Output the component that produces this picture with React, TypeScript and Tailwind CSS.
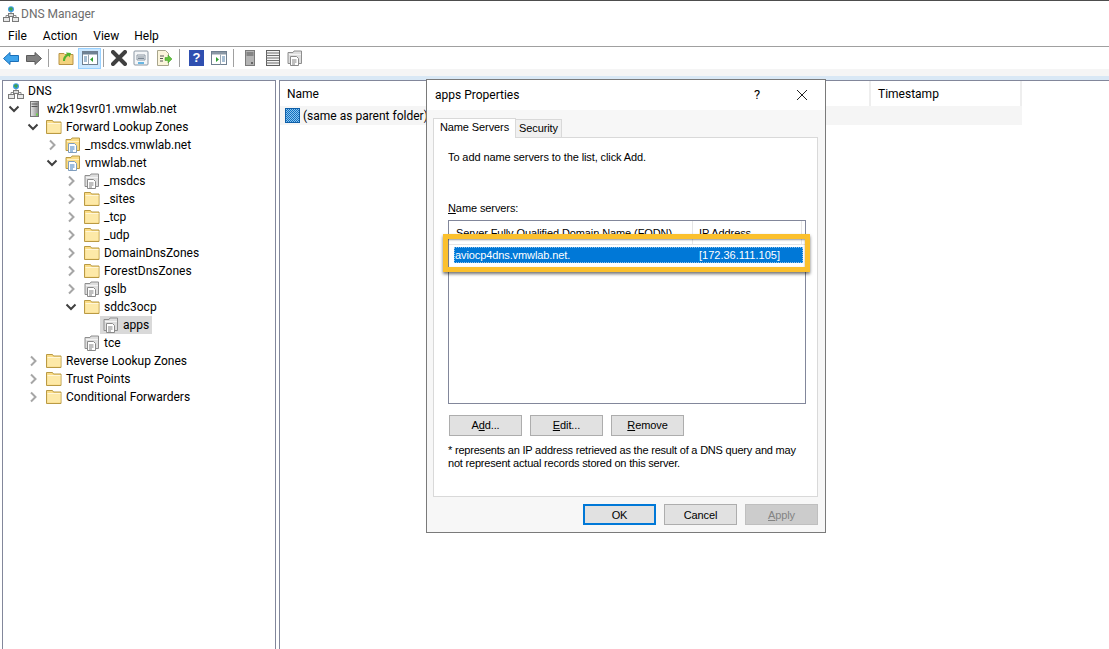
const uiFont = "font-['Roboto','Noto_Sans',sans-serif]"
const dlgFont = "font-['Liberation_Sans',Arial,sans-serif]"

function DnsIcon({ className = "" }: { className?: string }) {
  return (
    <svg viewBox="0 0 16 16" className={`w-4 h-4 shrink-0 ${className}`}>
      <circle cx="8" cy="3.200" r="3" fill="#3d9be0" />
      <path d="M6 2.200 8 1l2 1.500-1.500 2.500L6.500 4z" fill="#3fa34d" />
      <path d="M8 6v3M3 12V9.500h10V12" fill="none" stroke="#8a8a8a" />
      <rect x="5.500" y="7.500" width="5" height="3" fill="#dcdcdc" stroke="#7a7a7a" />
      <rect x="0.500" y="11.500" width="6" height="4" fill="#e8e8e8" stroke="#7a7a7a" />
      <rect x="9.500" y="11.500" width="6" height="4" fill="#e8e8e8" stroke="#7a7a7a" />
    </svg>
  )
}

function ServerIcon() {
  return (
    <svg viewBox="0 0 16 16" className="w-4 h-4 shrink-0">
      <defs>
        <linearGradient id="srv" x1="0" x2="1" y1="0" y2="0">
          <stop offset="0" stopColor="#e8e8e8" />
          <stop offset="1" stopColor="#8c8c8c" />
        </linearGradient>
      </defs>
      <rect x="3.500" y="0.500" width="8" height="15" fill="url(#srv)" stroke="#777" />
      <path d="M4.500 3h6M4.500 5.500h6" stroke="#555" />
      <rect x="9" y="12.500" width="2" height="2" fill="#6ccf4a" />
    </svg>
  )
}

function FolderIcon() {
  return (
    <svg viewBox="0 0 16 16" className="w-4 h-4 shrink-0">
      <path d="M.5 14.500V1.500h6l1 1.500h7.500v11.500z" fill="#fbdc85" stroke="#b99a44" />
      <path d="M1.500 4.500h13v9h-13z" fill="#fde9a8" />
      <path d="M1.500 4.500h13" stroke="#fff6d8" />
    </svg>
  )
}

function ZoneIcon({ grey = false }: { grey?: boolean }) {
  const edge = grey ? "#8e8e8e" : "#b99a44"
  const fill = grey ? "#dedede" : "#fbdc85"
  return (
    <svg viewBox="0 0 16 16" className="w-4 h-4 shrink-0">
      <path d="M1 13.500V2.500h5l1-1.500h7.500v12.500z" fill={fill} stroke={edge} />
      <path d="M2 4.500h12" stroke={grey ? "#f4f4f4" : "#fff2c4"} />
      <path d="M3.500 6.500h6l2 2v7h-8z" fill="#fff" stroke={grey ? "#8a8a8a" : "#7f9dbd"} />
      <path d="M5 10h4.500M5 12h4.500M5 14h3" stroke={grey ? "#808080" : "#3f7fc0"} />
    </svg>
  )
}

function Chevron({ open }: { open: boolean }) {
  return (
    <svg viewBox="0 0 14 14" className="w-3.5 h-3.5 shrink-0">
      <path
        d={open ? "M2.500 4.500 7 9l4.500-4.500" : "M5 2.500 9.500 7 5 11.500"}
        fill="none"
        stroke={open ? "#404040" : "#a6a6a6"}
        strokeWidth="2"
      />
    </svg>
  )
}

type TreeItem = {
  label: string
  level: number
  icon: "dns" | "server" | "folder" | "zone" | "grey"
  arrow?: "open" | "closed"
  selected?: boolean
}

const tree: TreeItem[] = [
  { label: "DNS", level: 0, icon: "dns" },
  { label: "w2k19svr01.vmwlab.net", level: 1, icon: "server", arrow: "open" },
  { label: "Forward Lookup Zones", level: 2, icon: "folder", arrow: "open" },
  { label: "_msdcs.vmwlab.net", level: 3, icon: "zone", arrow: "closed" },
  { label: "vmwlab.net", level: 3, icon: "zone", arrow: "open" },
  { label: "_msdcs", level: 4, icon: "grey", arrow: "closed" },
  { label: "_sites", level: 4, icon: "folder", arrow: "closed" },
  { label: "_tcp", level: 4, icon: "folder", arrow: "closed" },
  { label: "_udp", level: 4, icon: "folder", arrow: "closed" },
  { label: "DomainDnsZones", level: 4, icon: "folder", arrow: "closed" },
  { label: "ForestDnsZones", level: 4, icon: "folder", arrow: "closed" },
  { label: "gslb", level: 4, icon: "grey", arrow: "closed" },
  { label: "sddc3ocp", level: 4, icon: "folder", arrow: "open" },
  { label: "apps", level: 5, icon: "grey", selected: true },
  { label: "tce", level: 4, icon: "grey" },
  { label: "Reverse Lookup Zones", level: 2, icon: "folder", arrow: "closed" },
  { label: "Trust Points", level: 2, icon: "folder", arrow: "closed" },
  { label: "Conditional Forwarders", level: 2, icon: "folder", arrow: "closed" },
]

function TreeRow({ item }: { item: TreeItem }) {
  return (
    <div
      className="flex items-center h-[18px] text-[12px] text-black whitespace-nowrap"
      style={{ paddingLeft: item.level === 0 ? 5 : item.level * 19 - 15 }}
    >
      {item.level > 0 && (
        <span className="w-5 flex justify-start shrink-0">
          {item.arrow && <Chevron open={item.arrow === "open"} />}
        </span>
      )}
      <span className={`flex items-center h-[18px] ${item.selected ? "bg-[#d9d9d9] pl-[3px] -ml-[3px] pr-[3px]" : ""}`}>
        {item.icon === "dns" && <DnsIcon />}
        {item.icon === "server" && <ServerIcon />}
        {item.icon === "folder" && <FolderIcon />}
        {item.icon === "zone" && <ZoneIcon />}
        {item.icon === "grey" && <ZoneIcon grey />}
        <span className="ml-1">{item.label}</span>
      </span>
    </div>
  )
}

function Sep() {
  return <span className="block w-px h-[18px] bg-[#a0a0a0] shrink-0" />
}

function Toolbar() {
  return (
    <div className="flex items-center h-[22px] pl-[3px] bg-white">
      <svg viewBox="0 0 16 14" className="w-4 h-[15px] shrink-0">
        <path d="M.5 7 7 1v3h8.500v6H7v3z" fill="#3fa4ec" stroke="#1b6fb8" />
      </svg>
      <svg viewBox="0 0 16 14" className="w-4 h-[15px] shrink-0 ml-[7px]">
        <path d="M15.500 7 9 1v3H.5v6H9v3z" fill="#808080" stroke="#5b5b5b" />
      </svg>
      <span className="ml-[6px]"><Sep /></span>
      <svg viewBox="0 0 16 16" className="w-4 h-4 shrink-0 ml-[9px]">
        <path d="M1 14.500V3.500h5l1 1h8v10z" fill="#f3d27e" stroke="#b89344" />
        <path d="M5 11C5 7 7 5 9 4.500L8 2.500l5 .5-1.500 4.500-1-1.800C8.500 6.500 7 8.500 7 11z" fill="#4fb32f" />
      </svg>
      <span className="ml-[4px] flex items-center justify-center w-[23px] h-[21px] bg-[#cce8ff] border border-[#99d1ff] shrink-0">
        <svg viewBox="0 0 16 14" className="w-4 h-3.5">
          <rect x=".5" y=".5" width="15" height="13" fill="#fff" stroke="#6f7f8f" />
          <path d="M1 1h14v2.500H1z" fill="#6f8294" />
          <path d="M2 6h3M2 8h3M2 10h3" stroke="#4f7fa8" />
          <path d="M11 6v5L8 8.500z" fill="#30a030" />
          <path d="M6.500 3.500v10" stroke="#9aa6b2" />
        </svg>
      </span>
      <span className="ml-[2px]"><Sep /></span>
      <svg viewBox="0 0 16 16" className="w-4 h-4 shrink-0 ml-[7px]">
        <path d="M2 2 14 14M14 2 2 14" stroke="#404040" strokeWidth="4" strokeLinecap="round" />
      </svg>
      <svg viewBox="0 0 16 16" className="w-4 h-4 shrink-0 ml-[6px]">
        <rect x="1" y="1" width="14" height="14" rx="1" fill="#f4f6f8" stroke="#8b97a3" />
        <path d="M4 5h8v5H4z" fill="none" stroke="#8b97a3" />
        <path d="M5 7h6M5 8.500h6" stroke="#7b8793" />
        <path d="M5 13h6" stroke="#3aa0dc" strokeWidth="1.500" />
      </svg>
      <svg viewBox="0 0 16 16" className="w-4 h-4 shrink-0 ml-[7px]">
        <path d="M1.500.5h8l3 3V15.500h-11z" fill="#fbf5dc" stroke="#a8a58c" />
        <path d="M4 6h4M4 8.500h3M4 11h3" stroke="#555" />
        <path d="M9 7.500h3V5l4 4-4 4v-2.500H9z" fill="#62c23c" stroke="#3d9a25" strokeWidth=".5" />
      </svg>
      <span className="ml-[7px]"><Sep /></span>
      <span className="ml-[9px] w-[15px] h-4 shrink-0 flex items-center justify-center bg-[#2f4fb0] text-white text-[13px] font-bold font-['Liberation_Sans',sans-serif]">?</span>
      <svg viewBox="0 0 16 14" className="w-4 h-3.5 shrink-0 ml-[7px]">
        <rect x=".5" y=".5" width="15" height="13" fill="#fff" stroke="#6f7f8f" />
        <path d="M1 1h14v2.500H1z" fill="#8b98a5" />
        <path d="M5 6v5l3-2.500z" fill="#30a030" />
        <path d="M11 6h3M11 8h3M11 10h3" stroke="#4f7fa8" />
        <path d="M9.500 3.500v10" stroke="#9aa6b2" />
      </svg>
      <span className="ml-[6px]"><Sep /></span>
      <svg viewBox="0 0 10 16" className="w-2.5 h-4 shrink-0 ml-[11px]">
        <rect x=".5" y=".5" width="9" height="15" fill="#b4b4b4" stroke="#7a7a7a" />
        <path d="M1.500 3h7M1.500 5h7" stroke="#555" />
        <rect x="6" y="12" width="2" height="2" fill="#666" />
      </svg>
      <svg viewBox="0 0 16 16" className="w-4 h-4 shrink-0 ml-[10px]">
        <rect x="1.500" y=".5" width="13" height="15" fill="#f2f2f2" stroke="#5f5f5f" />
        <path d="M1 3h13M1 5.500h13M1 8h13M1 10.500h13M1 13h13" stroke="#6f6f6f" />
      </svg>
      <span className="ml-[6px]"><ZoneIcon grey /></span>
    </div>
  )
}

function PushButton({ children, className = "" }: { children: React.ReactNode; className?: string }) {
  return (
    <button className={`w-[73px] h-[21px] flex items-center justify-center bg-[#e1e1e1] border border-[#adadad] text-[11px] tracking-[-0.1px] text-black ${className}`}>
      {children}
    </button>
  )
}

function PropertiesDialog() {
  return (
    <div className={`absolute left-[426px] top-[79px] w-[400px] h-[454px] flex flex-col bg-[#f7f7f7] border border-[#7a7a7a] text-black text-[11px] tracking-[-0.1px] ${dlgFont}`}>
      <div className="h-[30px] shrink-0 bg-white flex items-center pl-2 pr-4">
        <span className={`text-[12px] tracking-normal ${uiFont}`}>apps Properties</span>
        <span className={`ml-auto text-[13px] ${uiFont}`}>?</span>
        <svg viewBox="0 0 12 12" className="w-3 h-3 ml-[36px] mr-[1px]">
          <path d="M1 1l10 10M11 1 1 11" stroke="#222" strokeWidth="1" />
        </svg>
      </div>
      <div className="flex items-end h-[27px] shrink-0 pl-1.5">
        <div className="w-[83px] h-[20px] flex items-center justify-center bg-white border border-b-0 border-[#d9d9d9] -mb-px relative z-10 pb-[2px]">Name Servers</div>
        <div className="w-[46px] h-[18px] flex items-center justify-center bg-[#f0f0f0] border border-b-0 border-l-0 border-[#d9d9d9]">Security</div>
      </div>
      <div className="w-[385px] h-[360px] ml-1.5 bg-white border border-[#d9d9d9] flex flex-col px-[14px]">
        <p className="mt-[12px] leading-[14px]">To add name servers to the list, click Add.</p>
        <p className="mt-[37px] leading-[14px]"><u>N</u>ame servers:</p>
        <div className="relative mt-[5px] w-[358px] h-[184px] shrink-0 border border-[#82879b] bg-white">
          <div className="flex h-[24px] border-b border-[#e5e5e5] leading-[24px] whitespace-nowrap">
            <span className="w-[244px] pl-[7px] overflow-hidden border-r border-[#e5e5e5]">Server Fully Qualified Domain Name (FQDN)</span>
            <span className="w-[109px] pl-[6px] border-r border-[#e5e5e5]">IP Address</span>
          </div>
          <div className="flex items-center mt-px ml-[5px] mr-[2px] h-[16px] bg-[#0078d7] text-white outline-1 outline-dotted outline-[#8cc0ea] -outline-offset-1 relative top-[1px]">
            <span className="w-[245px] pl-[1px]">aviocp4dns.vmwlab.net.</span>
            <span className="tracking-normal">[172.36.111.105]</span>
          </div>
          <div className="absolute -left-[6px] top-[13px] w-[367px] h-[38px] border-[5px] border-[#fbc02d] shadow-[0_2px_3px_rgba(0,0,0,0.55),inset_0_1px_2px_rgba(0,0,0,0.4)]" />
        </div>
        <div className="flex gap-2 mt-[11px] ml-px">
          <PushButton>A<u>d</u>d...</PushButton>
          <PushButton><u>E</u>dit...</PushButton>
          <PushButton><u>R</u>emove</PushButton>
        </div>
        <p className="mt-[8px] leading-[13px] whitespace-nowrap tracking-[-0.2px]">
          * represents an IP address retrieved as the result of a DNS query and may<br />
          not represent actual records stored on this server.
        </p>
      </div>
      <div className="flex gap-2 pl-[156px] mt-[7px]">
        <PushButton className="!border-2 !border-[#0078d7] pt-px">OK</PushButton>
        <PushButton className="pt-px">Cancel</PushButton>
        <PushButton className="!bg-[#cccccc] !border-[#bfbfbf] !text-[#838383] pt-px"><u>A</u>pply</PushButton>
      </div>
    </div>
  )
}

export default function App() {
  return (
    <div className={`relative w-[1109px] h-[649px] overflow-hidden bg-white flex flex-col ${uiFont}`}>
      <div className="h-px bg-[#4d4d4d] shrink-0" />
      <div className="h-[25px] shrink-0 flex items-center pl-[3px] text-[12px] text-[#6d6d6d]">
        <DnsIcon />
        <span className="ml-[2px]">DNS Manager</span>
      </div>
      <div className="h-[20px] shrink-0 flex items-center text-[12px] text-black border-b border-[#a0a0a0] box-content">
        <span className="ml-[8px]">File</span>
        <span className="ml-[16px]">Action</span>
        <span className="ml-[16px]">View</span>
        <span className="ml-[15px]">Help</span>
      </div>
      <Toolbar />
      <div className="h-[7px] shrink-0 bg-[#f5f5f5]" />
      <div className="h-1 shrink-0 bg-[#d9e8f5]" />
      <div className="flex flex-1 min-h-0 pl-[2px]">
        <div className="w-[274px] shrink-0 border border-b-0 border-[#82879b] pt-px">
          {tree.map((item) => (
            <TreeRow key={item.label + item.level} item={item} />
          ))}
        </div>
        <div className="flex-1 ml-[3px] border-l border-t border-[#82879b] text-[12px] text-black">
          <div className="flex h-[25px] items-center w-[742px]">
            <span className="w-[591px] pl-[7px] h-full flex items-center border-r-2 border-[#eeeeee]">Name</span>
            <span className="flex-1 pl-[7px] h-full flex items-center border-r-2 border-[#eeeeee]">Timestamp</span>
          </div>
          <div className="flex items-center h-[19px] w-[742px] bg-[#f5f5f5] pl-[5px]">
            <span className="w-[15px] h-[15px] shrink-0 border border-[#0f5fa8] bg-[repeating-conic-gradient(#0f6fc0_0%_25%,#8cc4ee_0%_50%)] bg-[length:2px_2px]" />
            <span className="ml-[3px]">(same as parent folder)</span>
          </div>
        </div>
      </div>
      <PropertiesDialog />
    </div>
  )
}
